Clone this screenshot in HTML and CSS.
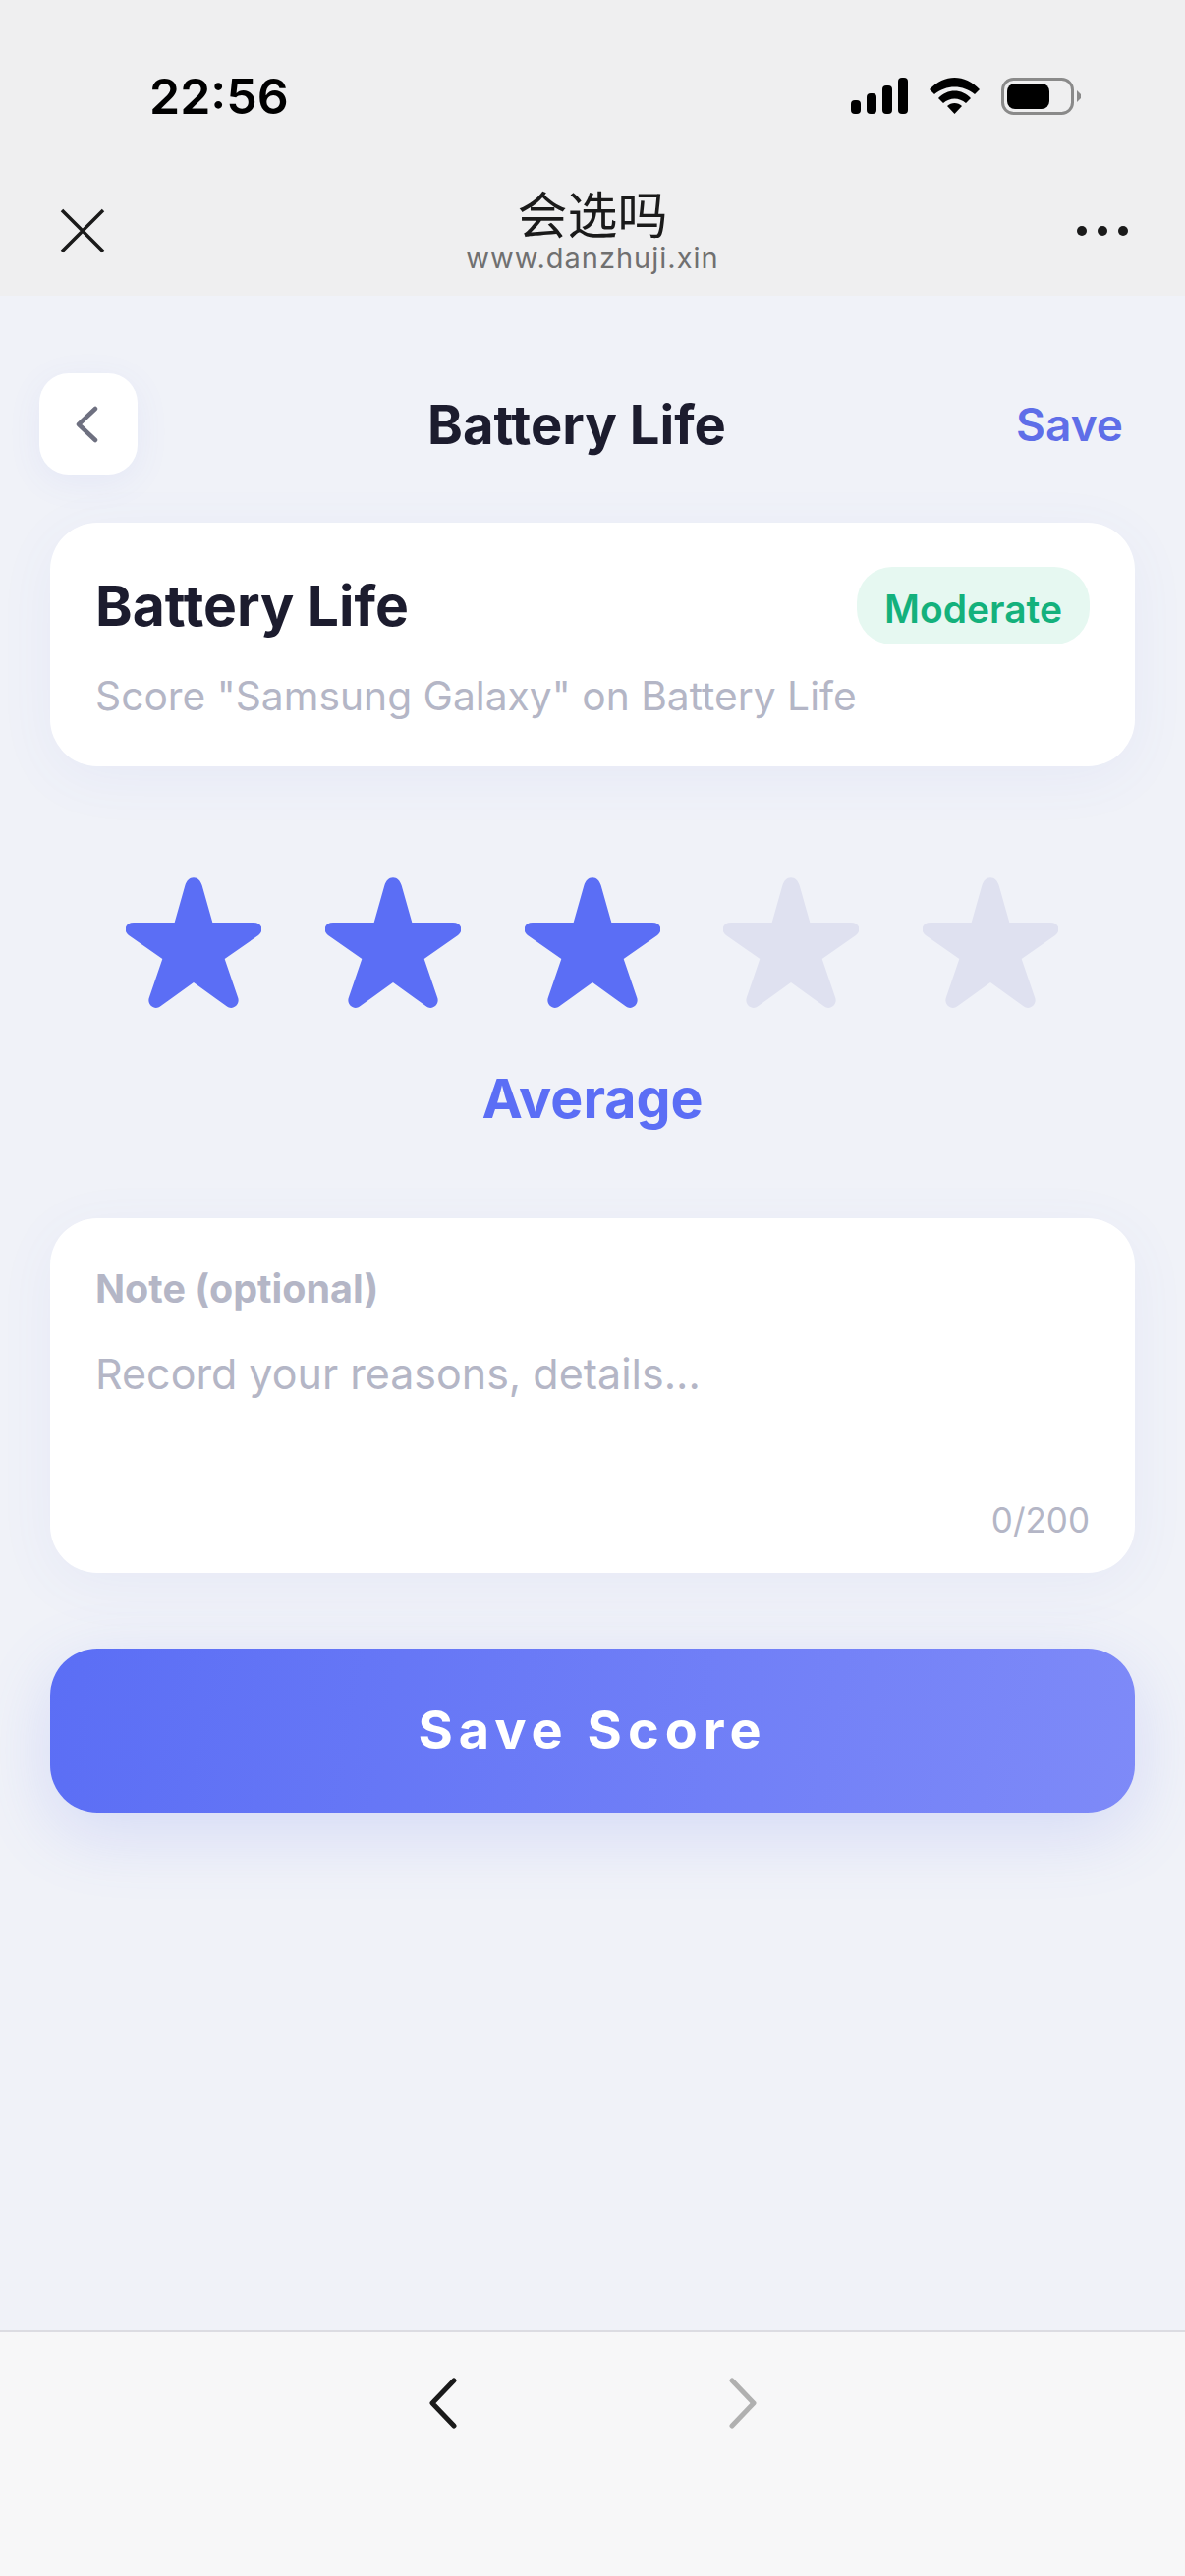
FILE: index.html
```html
<!DOCTYPE html>
<html lang="en">
<head>
<meta charset="utf-8">
<title>Battery Life</title>
<link rel="stylesheet" href="styles.css">
</head>
<body>
<svg class="defs" width="0" height="0" aria-hidden="true">
  <symbol id="star" viewBox="0 0 414 397">
    <path d="M207 0C220 0 228 9 233 24L265 137L390 137C415 137 424 161 405 176L302 248L343 368C349 390 325 406 308 393L207 320L106 393C89 406 65 390 71 368L112 248L9 176C-10 161 -1 137 24 137L149 137L181 24C186 9 194 0 207 0Z"/>
  </symbol>
</svg>
<div class="app">
  <header class="chrome">
    <div class="status">
      <span class="time">22:56</span>
      <div class="status-icons">
        <svg class="signal" width="58" height="37" viewBox="0 0 58 37"><rect x="0" y="23" width="10" height="14" rx="4"/><rect x="16" y="16" width="10" height="21" rx="4"/><rect x="32" y="8" width="10" height="29" rx="4"/><rect x="48" y="0" width="10" height="37" rx="4"/></svg>
        <svg class="wifi" width="51" height="37" viewBox="0 0 51 37"><path d="M0 12C15 -4 36 -4 51 12L46 17C34 7 17 7 5 17Z"/><path d="M9 21C18 11 33 11 42 21L37 26C30 20 21 20 14 26Z"/><path d="M18 29C22 25 29 25 33 29L25.500 37Z"/></svg>
        <svg class="battery" width="82" height="38" viewBox="0 0 82 38"><rect x="1.500" y="1.500" width="71" height="35" rx="11" class="batt-frame"/><rect x="6" y="6" width="43" height="26" rx="8"/><path d="M77 13L81 17V21L77 25Z" class="batt-cap"/></svg>
      </div>
    </div>
    <div class="navbar">
      <svg class="nav-close" width="46" height="46" viewBox="0 0 46 46"><path d="M2 2L44 44M44 2L2 44"/></svg>
      <div class="nav-title">
        <div class="nav-name">会选吗</div>
        <div class="nav-url">www.danzhuji.xin</div>
      </div>
      <div class="nav-more"><i></i><i></i><i></i></div>
    </div>
  </header>

  <main class="page">
    <div class="page-head">
      <button class="back" type="button">
        <svg width="24" height="38" viewBox="0 0 24 38"><path d="M21 3L4 19L21 35"/></svg>
      </button>
      <h1 class="head-title">Battery Life</h1>
      <span class="head-save">Save</span>
    </div>

    <section class="card info-card">
      <div class="info-top">
        <h2 class="info-title">Battery Life</h2>
        <span class="badge">Moderate</span>
      </div>
      <p class="info-sub">Score "Samsung Galaxy" on Battery Life</p>
    </section>

    <div class="stars">
      <svg class="star on"><use href="#star"/></svg>
      <svg class="star on"><use href="#star"/></svg>
      <svg class="star on"><use href="#star"/></svg>
      <svg class="star off"><use href="#star"/></svg>
      <svg class="star off"><use href="#star"/></svg>
    </div>
    <div class="rating-label">Average</div>

    <section class="card note-card">
      <div class="note-label">Note (optional)</div>
      <div class="note-placeholder">Record your reasons, details...</div>
      <div class="note-count">0/200</div>
    </section>

    <button class="save-btn" type="button">Save Score</button>
  </main>

  <footer class="bottom">
    <svg class="bottom-arrow dark" width="30" height="52" viewBox="0 0 30 52"><path d="M26 3L4 26L26 49"/></svg>
    <svg class="bottom-arrow grey" width="30" height="52" viewBox="0 0 30 52"><path d="M4 3L26 26L4 49"/></svg>
  </footer>
</div>
</body>
</html>
```
FILE: styles.css
```css
* { box-sizing: border-box; }
html, body { margin: 0; padding: 0; }
body {
  width: 1206px;
  height: 2622px;
  overflow: hidden;
  font-family: Inter, "Noto Sans CJK SC", sans-serif;
  background: #f0f2f8;
}
.defs { position: absolute; }
.app { display: flex; flex-direction: column; height: 2622px; }

/* browser chrome */
.chrome { height: 301px; background: #efeff0; flex: none; }
.status {
  height: 172px;
  padding: 70px 105px 0 152px;
  display: flex;
  justify-content: space-between;
  align-items: flex-start;
}
.time { font-size: 50px; line-height: 56px; font-weight: 600; color: #000; letter-spacing: 0; }
.status-icons { display: flex; gap: 22px; align-items: flex-start; padding-top: 9px; }
.signal, .wifi { fill: #000; }
.battery { fill: #000; }
.batt-frame { fill: none; stroke: #8a8a8a; stroke-width: 3; }
.batt-cap { fill: #8a8a8a; }
.navbar {
  height: 129px;
  padding: 0 58px 0 61px;
  display: flex;
  justify-content: space-between;
  align-items: flex-start;
  position: relative;
}
.nav-close { margin-top: 40px; fill: none; stroke: #1a1a1a; stroke-width: 3.500; }
.nav-title {
  position: absolute;
  left: 0;
  right: 0;
  top: 18px;
  text-align: center;
}
.nav-name { font-size: 51px; line-height: 52px; color: #1a1a1a; font-family: "Noto Sans CJK SC", sans-serif; }
.nav-url { font-size: 29px; line-height: 32px; margin-top: 5px; color: #707070; letter-spacing: 1px; font-family: Inter, sans-serif; }
.nav-more { display: flex; gap: 11px; margin-top: 58px; }
.nav-more i { width: 10px; height: 10px; border-radius: 50%; background: #1a1a1a; display: block; }

/* page */
.page { flex: 1; padding: 79px 51px 0; display: flex; flex-direction: column; }
.page-head {
  display: flex;
  justify-content: space-between;
  align-items: center;
  margin: 0 12px 49px -11px;
  height: 103px;
}
.back {
  width: 100px;
  height: 103px;
  border: 0;
  border-radius: 30px;
  background: #fff;
  box-shadow: 0 8px 36px rgba(90, 105, 220, .07);
  display: flex;
  align-items: center;
  justify-content: center;
  padding: 0 4px 0 0;
}
.back svg { fill: none; stroke: #6e7080; stroke-width: 4.500; stroke-linecap: round; stroke-linejoin: round; }
.head-title { margin: 0; font-size: 54.300px; line-height: 64px; font-weight: 700; color: #1c1c2e; }
.head-save { font-size: 46px; line-height: 56px; font-weight: 600; color: #5f6ee8; }

.card {
  background: #fff;
  border-radius: 48px;
  box-shadow: 0 12px 60px rgba(90, 105, 220, .06);
}
.info-card { height: 248px; padding: 45px 46px 0; }
.info-top { display: flex; justify-content: space-between; align-items: flex-start; }
.info-title { margin: 0; padding-top: 6px; font-size: 57px; line-height: 68px; font-weight: 700; color: #1c1c2e; }
.badge {
  height: 79px;
  padding: 0 28px;
  border-radius: 36px;
  background: #e6f8f1;
  color: #14b17c;
  font-size: 39px;
  font-weight: 600;
  line-height: 86px;
}
.info-sub { margin: 27px 0 0; font-size: 40.750px; line-height: 52px; color: #b4b6c6; }

.stars { display: flex; justify-content: space-between; padding: 0 78px 0 77px; margin-top: 113px; }
.star { width: 138px; height: 133px; }
.star.on { fill: #5b6ef5; }
.star.off { fill: #dfe1f0; }
.rating-label {
  text-align: center;
  margin-top: 58px;
  font-size: 55.500px;
  line-height: 68px;
  font-weight: 700;
  color: #5b6ef5;
}

.note-card {
  height: 361px;
  margin-top: 88px;
  padding: 47px 46px 32px;
  display: flex;
  flex-direction: column;
}
.note-label { font-size: 39.500px; line-height: 50px; font-weight: 700; color: #b4b6c6; }
.note-placeholder { margin-top: 34px; font-size: 43px; line-height: 54px; color: #b4b6c6; }
.note-count { margin-top: auto; text-align: right; font-size: 35px; line-height: 44px; color: #b4b6c6; }

.save-btn {
  height: 167px;
  margin-top: 77px;
  padding: 0 0 2px;
  border: 0;
  border-radius: 48px;
  background: linear-gradient(100deg, #5b6ef5, #7e8af8);
  box-shadow: 0 20px 70px rgba(91, 110, 245, .18);
  color: #fff;
  font-family: Inter, sans-serif;
  font-size: 54px;
  font-weight: 700;
  letter-spacing: 6px;
}

.bottom {
  height: 250px;
  flex: none;
  background: #f7f7f8;
  border-top: 2px solid #dcdce2;
  display: flex;
  justify-content: center;
  gap: 275px;
  padding-top: 46px;
}
.bottom-arrow { fill: none; stroke-width: 5; stroke-linecap: round; stroke-linejoin: round; }
.bottom-arrow.dark { stroke: #1a1a1a; }
.bottom-arrow.grey { stroke: #b0b0b0; }
```
